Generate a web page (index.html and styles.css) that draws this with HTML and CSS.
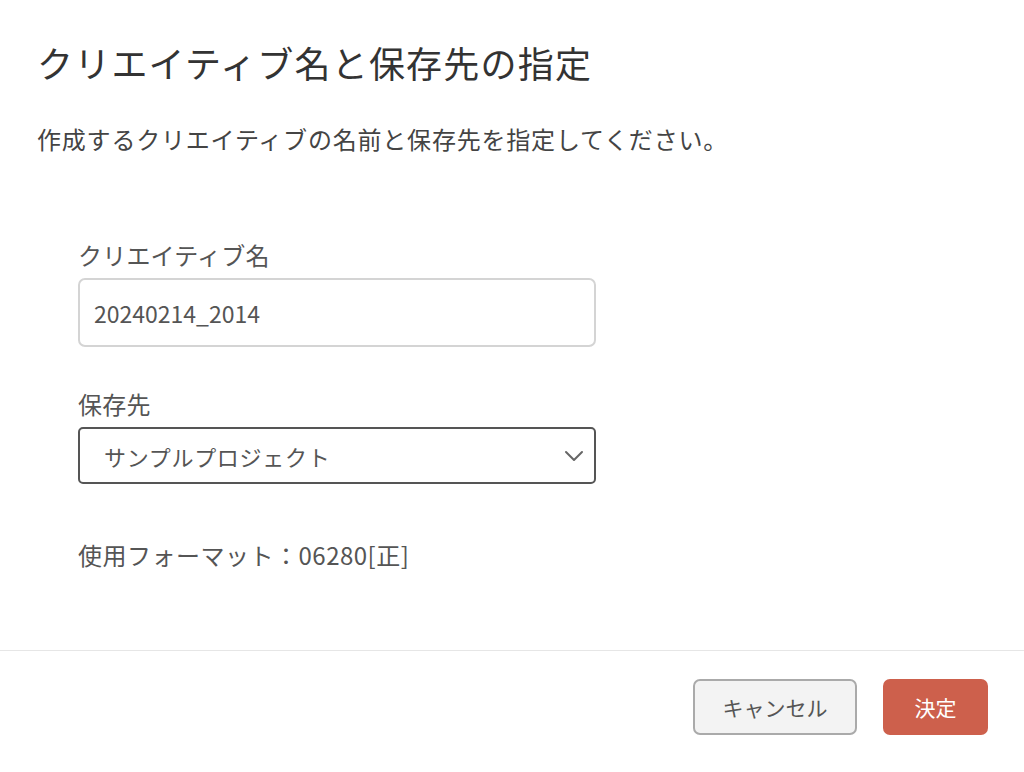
FILE: index.html
```
<!DOCTYPE html>
<html lang="ja">
<head>
    <meta charset="UTF-8">
    <meta name="viewport" content="width=device-width, initial-scale=1.0">
    <title>クリエイティブ名と保存先の指定</title>
    <link rel="stylesheet" href="styles.css">
</head>
<body>
    <div class="dialog">
        <div class="dialog-body">
            <h1 class="dialog-title">クリエイティブ名と保存先の指定</h1>
            <p class="dialog-lead">作成するクリエイティブの名前と保存先を指定してください。</p>

            <div class="form">
                <div class="field">
                    <label class="field-label" for="creativeName">クリエイティブ名</label>
                    <input class="text-input" id="creativeName" type="text" value="20240214_2014">
                </div>

                <div class="field">
                    <label class="field-label" for="saveTarget">保存先</label>
                    <div class="select">
                        <span class="select-value" id="saveTarget">サンプルプロジェクト</span>
                        <svg class="select-arrow" width="20" height="12" viewBox="0 0 20 12" fill="none">
                            <path d="M2 2 L10 10 L18 2" stroke="#666" stroke-width="2" stroke-linecap="round" stroke-linejoin="round"/>
                        </svg>
                    </div>
                </div>

                <p class="format-info">使用フォーマット：06280[正]</p>
            </div>
        </div>

        <div class="dialog-footer">
            <button class="btn btn-cancel">キャンセル</button>
            <button class="btn btn-primary">決定</button>
        </div>
    </div>
</body>
</html>
```

FILE: styles.css
```
body {
    margin: 0;
    background: #fff;
    color: #444;
    font-family: "Noto Sans CJK JP", "Noto Sans", sans-serif;
}

.dialog {
    width: 1024px;
    height: 772px;
    display: flex;
    flex-direction: column;
}

.dialog-body {
    flex: 1;
    padding: 35px 37px 0;
}

.dialog-title {
    margin: 0;
    font-size: 36px;
    font-weight: 400;
    line-height: 54px;
    letter-spacing: 1.2px;
    color: #333;
}

.dialog-lead {
    margin: 32px 0 0;
    font-size: 24px;
    line-height: 36px;
    letter-spacing: 0.8px;
    color: #444;
}

.form {
    margin-top: 81px;
    padding-left: 41px;
    width: 518px;
}

.field {
    margin-bottom: 40px;
}

.field-label {
    display: block;
    font-size: 24px;
    line-height: 34px;
    letter-spacing: 0.2px;
    margin-bottom: 6px;
    color: #555;
}

.text-input {
    box-sizing: border-box;
    width: 100%;
    height: 69px;
    padding: 0 14px;
    border: 2px solid #d4d4d4;
    border-radius: 7px;
    font-family: inherit;
    font-size: 23px;
    color: #555;
    outline: none;
}

.select {
    box-sizing: border-box;
    height: 57px;
    display: flex;
    align-items: center;
    justify-content: space-between;
    padding: 0 10px 0 24px;
    border: 2px solid #555;
    border-radius: 5px;
}

.select-value {
    font-size: 22px;
    letter-spacing: 0.7px;
    color: #555;
}

.format-info {
    margin: 54px 0 0;
    font-size: 24px;
    line-height: 34px;
    letter-spacing: 0.5px;
    color: #555;
}

.dialog-footer {
    border-top: 1px solid #e6e6e6;
    height: 122px;
    box-sizing: border-box;
    display: flex;
    justify-content: flex-end;
    align-items: flex-start;
    gap: 26px;
    padding: 28px 36px 0;
}

.btn {
    height: 56px;
    border-radius: 7px;
    font-family: inherit;
    font-size: 21px;
    cursor: pointer;
}

.btn-cancel {
    width: 164px;
    background: #f3f3f3;
    border: 2px solid #aaa;
    color: #555;
}

.btn-primary {
    width: 105px;
    background: #cd604c;
    border: none;
    color: #fff;
}
```
